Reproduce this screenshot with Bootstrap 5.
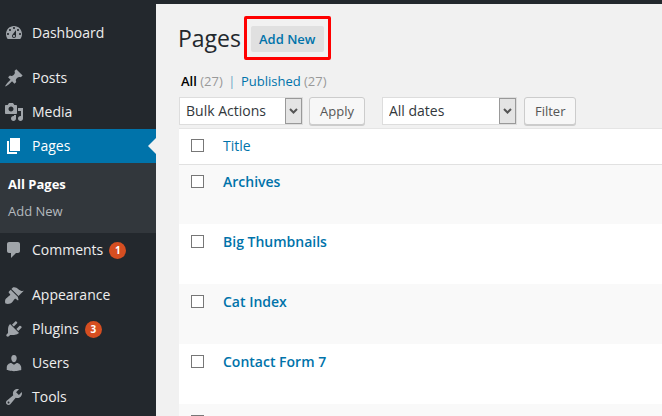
<!DOCTYPE html>
<html lang="en">
<head>
<meta charset="utf-8">
<title>Pages</title>
<link href="https://cdn.jsdelivr.net/npm/bootstrap@5.3.0/dist/css/bootstrap.min.css" rel="stylesheet">
<style>
html,body{height:416px;overflow:hidden}
body{font-family:"Open Sans","Liberation Sans",sans-serif;background:#f1f1f1;color:#444;font-size:13px}
.topstrip{height:4px;background:#23282d}
.shell{height:412px;overflow:hidden}
.side{width:156px;flex:none;background:#23282d;padding-top:12px;height:412px;overflow:hidden}
.side-item{height:34px;padding:0 0 2px 4px;gap:8px;color:#eee;font-size:14px;text-decoration:none;position:relative}
.side-item svg{width:20px;height:20px;fill:#a0a5aa;flex:none;margin-top:2px}
.side-gap{height:11px}
.side-item.now{background:#0073aa;color:#fff}
.side-item.now svg{fill:#fff}
.side-item.now::after{content:"";position:absolute;right:0;top:9px;border:8px solid transparent;border-right-color:#f1f1f1;border-left-width:0}
.side-sub{background:#32373c;height:70px;padding:8px 8px 0}
.side-sub a{display:block;height:27px;line-height:27px;font-size:13px;color:#b4b9be;text-decoration:none}
.side-sub a.on{color:#fff;font-weight:700}
.bubble{width:17px;height:17px;border-radius:50%;background:#d54e21;color:#fff;font-size:10px;font-weight:700;line-height:17px;text-align:center;margin:2px 0 0 -2px}
.main{flex:1 1 auto;min-width:0;padding:12px 0 0 23px;overflow:hidden}
.head-row{height:44px}
.head-title{font-size:23px;font-weight:400;color:#23282d;line-height:44px;margin:0 0 0 -1px}
.redbox{border:3px solid #f00;border-radius:2px;margin-left:3px;padding:7px 4px 5px 4px;height:44px}
.addbtn{display:block;background:#e0e0e0;color:#0073aa;font-size:13px;font-weight:600;height:26px;line-height:26px;padding:0 9px 0 8px;border-radius:2px;text-decoration:none}
.sublinks{margin-top:12px;padding-left:2px;height:18px;line-height:18px;font-size:13px;color:#999}
.sublinks b{font-weight:600;color:#000}
.sublinks a{color:#0073aa;text-decoration:none}
.sep{color:#6ea5c6;margin:0 5.5px}
.tools{margin-top:7px;height:28px}
.pick{height:28px;border:1px solid #ddd;border-radius:0;padding:0 0 0 6px;font-size:14px;line-height:26px;color:#32373c;box-shadow:none;font-family:inherit;background-color:#fff;background-position:right 0 center;background-size:auto;background-repeat:no-repeat;
background-image:url("data:image/svg+xml,%3Csvg xmlns='http://www.w3.org/2000/svg' width='17' height='26'%3E%3Crect x='.5' y='.5' width='16' height='25' fill='%23e4e4e4' stroke='%23999'/%3E%3Cpath d='M5 11l3.500 3.500L12 11' fill='none' stroke='%23555' stroke-width='2'/%3E%3C/svg%3E")}
.pick-a{width:124px}
.pick-b{width:135px;margin-left:17px}
.plainbtn{height:28px;background:#f7f7f7;border:1px solid #ccc;border-radius:3px;box-shadow:0 1px 0 #ccc;color:#555;font-size:13px;line-height:24px;padding:0 10px;margin-left:6px}
.plainbtn.narrow{margin-left:7px}
.pagelist{margin:3px 0 0;background:#fff;border-top:1px solid #e5e5e5;width:100%;border-collapse:collapse}
.pagelist td,.pagelist th{border:0;vertical-align:top;padding:0}
.pagelist .hrow th{height:35px;padding-top:8px;font-weight:400;font-size:14px;line-height:18px}
.pagelist a{color:#0073aa;text-decoration:none}
.pagelist .drow td{height:60px;padding-top:8px;font-size:14px;line-height:19px;font-weight:600}
.pagelist .drow:nth-child(even) td{background:#f9f9f9}
.pagelist .hrow + .drow td{box-shadow:inset 0 1px 0 #e1e1e1}
.cbcell{width:44px;padding-left:12px!important}
.tick{display:block;width:13px;height:13px;margin:2px 0 0;border:1px solid #777;background:#fff;appearance:none}
.drow .tick{margin-top:3px}
</style>
</head>
<body>
<div class="topstrip"></div>
<div class="shell d-flex">
  <nav class="side">
    <a class="side-item d-flex align-items-center" href="#"><svg viewBox="0 0 20 20"><path d="M3.76 16h12.48c1.1-1.37 1.76-3.11 1.76-5 0-4.420-3.580-8-8-8s-8 3.580-8 8c0 1.890.66 3.630 1.760 5zM10 4c.55 0 1 .45 1 1s-.45 1-1 1-1-.45-1-1 .45-1 1-1zM6 6c.55 0 1 .45 1 1s-.45 1-1 1-1-.45-1-1 .45-1 1-1zm8 0c.55 0 1 .45 1 1s-.45 1-1 1-1-.45-1-1 .45-1 1-1zm-5.370 5.550L12 7v6c0 1.100-.9 2-2 2s-2-.9-2-2c0-.57.24-1.080.63-1.450zM4 10c.55 0 1 .45 1 1s-.45 1-1 1-1-.45-1-1 .45-1 1-1zm12 0c.55 0 1 .45 1 1s-.45 1-1 1-1-.45-1-1 .45-1 1-1zm-5 3c0-.55-.45-1-1-1s-1 .45-1 1 .45 1 1 1 1-.45 1-1z" fill-rule="evenodd"/></svg>Dashboard</a>
    <div class="side-gap"></div>
    <a class="side-item d-flex align-items-center" href="#"><svg viewBox="0 0 20 20"><path d="M10.440 3.020l1.820-1.820 6.360 6.350-1.830 1.820c-1.050-.68-2.480-.57-3.410.36l-.75.75c-.92.93-1.040 2.350-.35 3.410l-1.830 1.820-2.410-2.410-2.800 2.790c-.42.42-3.380 2.710-3.800 2.290s1.860-3.390 2.280-3.810l2.790-2.790L4.100 9.360l1.830-1.820c1.050.69 2.480.57 3.400-.36l.75-.75c.93-.92 1.050-2.350.36-3.410z"/></svg>Posts</a>
    <a class="side-item d-flex align-items-center" href="#"><svg viewBox="0 0 20 20"><path fill-rule="evenodd" d="M13 11V4c0-.55-.45-1-1-1h-1.670L9 1H5L3.670 3H2c-.55 0-1 .45-1 1v7c0 .55.45 1 1 1h10c.55 0 1-.45 1-1zM7 4.500c1.380 0 2.500 1.120 2.500 2.500S8.380 9.500 7 9.500 4.500 8.380 4.500 7 5.620 4.500 7 4.500zM14 6h5v10.500c0 1.380-1.120 2.500-2.500 2.500S14 17.880 14 16.500s1.120-2.500 2.500-2.500c.17 0 .34.02.5.05V9h-3V6zm-4 8.050V13h2v3.500c0 1.380-1.120 2.500-2.500 2.500S7 17.880 7 16.500 8.120 14 9.500 14c.17 0 .34.02.5.05z"/></svg>Media</a>
    <a class="side-item now d-flex align-items-center" href="#"><svg viewBox="0 0 20 20"><path d="M6 15V2h10v13H6zm-1 1h8v2H3V5h2v11z"/></svg>Pages</a>
    <div class="side-sub"><a class="on" href="#">All Pages</a><a href="#">Add New</a></div>
    <a class="side-item d-flex align-items-center" href="#"><svg viewBox="0 0 20 20"><path d="M5 2h9c1.100 0 2 .9 2 2v7c0 1.100-.9 2-2 2h-2l-5 5v-5H5c-1.100 0-2-.9-2-2V4c0-1.100.9-2 2-2z"/></svg>Comments<span class="bubble">1</span></a>
    <div class="side-gap"></div>
    <a class="side-item d-flex align-items-center" href="#"><svg viewBox="0 0 20 20"><path d="M14.480 11.060L7.410 3.990l1.500-1.500c.5-.56 2.300-.47 3.510.32 1.210.8 1.430 1.280 2.910 2.100 1.180.64 2.450 1.260 4.450.85zm-.71.71L6.700 4.700 4.930 6.470c-.39.39-.39 1.020 0 1.410l1.060 1.060c.39.39.39 1.030 0 1.420-.6.6-1.430 1.110-2.210 1.690-.35.26-.7.53-1.010.84C1.430 13.230.44 15.950 1.500 18.500c2.550 1.060 5.270.07 6.610-1.270.31-.31.58-.66.84-1.010.58-.78 1.090-1.610 1.690-2.210.39-.39 1.030-.39 1.420 0l1.060 1.060c.39.39 1.020.39 1.410 0z"/></svg>Appearance</a>
    <a class="side-item d-flex align-items-center" href="#"><svg viewBox="0 0 20 20"><path d="M13.110 4.360L9.870 7.600 8 5.730l3.240-3.240c.35-.34 1.050-.2 1.560.32.52.51.66 1.210.31 1.550zm-8 1.770l.91-1.120 9.010 9.010-1.190.84c-.71.71-2.630 1.160-3.820 1.160H6.140L4.900 17.260c-.59.59-1.540.59-2.120 0-.59-.58-.59-1.530 0-2.120l1.240-1.240v-3.880c0-1.130.4-3.190 1.090-3.890zm7.260 3.970l3.240-3.240c.34-.35 1.040-.21 1.550.31.52.51.66 1.210.31 1.550l-3.240 3.250z"/></svg>Plugins<span class="bubble">3</span></a>
    <a class="side-item d-flex align-items-center" href="#"><svg viewBox="0 0 20 20"><path d="M10 9.250c-2.270 0-2.730-3.440-2.730-3.440C7 4.020 7.820 2 9.970 2c2.160 0 2.980 2.020 2.710 3.810 0 0-.41 3.440-2.680 3.440zm0 2.570L12.720 10c2.390 0 4.520 2.330 4.520 4.530v2.490s-3.650 1.130-7.240 1.130c-3.650 0-7.240-1.130-7.240-1.130v-2.490c0-2.250 1.940-4.480 4.470-4.480z"/></svg>Users</a>
    <a class="side-item d-flex align-items-center" href="#"><svg viewBox="0 0 20 20"><path fill-rule="evenodd" d="M16.680 9.770c-1.340 1.340-3.300 1.670-4.950.99l-5.410 6.520c-.99.99-2.590.99-3.580 0s-.99-2.590 0-3.570l6.520-5.420c-.68-1.650-.35-3.610.99-4.950 1.280-1.280 3.120-1.620 4.720-1.060l-2.890 2.890 2.820 2.820 2.860-2.870c.53 1.580.18 3.390-1.080 4.650zM3.810 16.210c.4.39 1.040.39 1.430 0 .4-.4.4-1.040 0-1.430-.39-.4-1.030-.4-1.430 0-.39.39-.39 1.030 0 1.430z"/></svg>Tools</a>
  </nav>
  <main class="main">
    <div class="head-row d-flex align-items-start">
      <h1 class="head-title">Pages</h1>
      <div class="redbox"><a class="addbtn" href="#">Add New</a></div>
    </div>
    <div class="sublinks"><b>All</b> (27)<span class="sep">|</span><a href="#">Published</a> (27)</div>
    <div class="tools d-flex">
      <select class="form-select pick pick-a"><option>Bulk Actions</option></select>
      <button class="btn plainbtn" type="button">Apply</button>
      <select class="form-select pick pick-b"><option>All dates</option></select>
      <button class="btn plainbtn narrow" type="button">Filter</button>
    </div>
    <table class="pagelist">
      <tbody>
        <tr class="hrow"><th class="cbcell"><input class="tick" type="checkbox" aria-label="Select all"></th><th><a href="#">Title</a></th></tr>
        <tr class="drow"><td class="cbcell"><input class="tick" type="checkbox" aria-label="Select"></td><td><a href="#">Archives</a></td></tr>
        <tr class="drow"><td class="cbcell"><input class="tick" type="checkbox" aria-label="Select"></td><td><a href="#">Big Thumbnails</a></td></tr>
        <tr class="drow"><td class="cbcell"><input class="tick" type="checkbox" aria-label="Select"></td><td><a href="#">Cat Index</a></td></tr>
        <tr class="drow"><td class="cbcell"><input class="tick" type="checkbox" aria-label="Select"></td><td><a href="#">Contact Form 7</a></td></tr>
        <tr class="drow"><td class="cbcell"><input class="tick" type="checkbox" aria-label="Select"></td><td></td></tr>
      </tbody>
    </table>
  </main>
</div>
</body>
</html>
